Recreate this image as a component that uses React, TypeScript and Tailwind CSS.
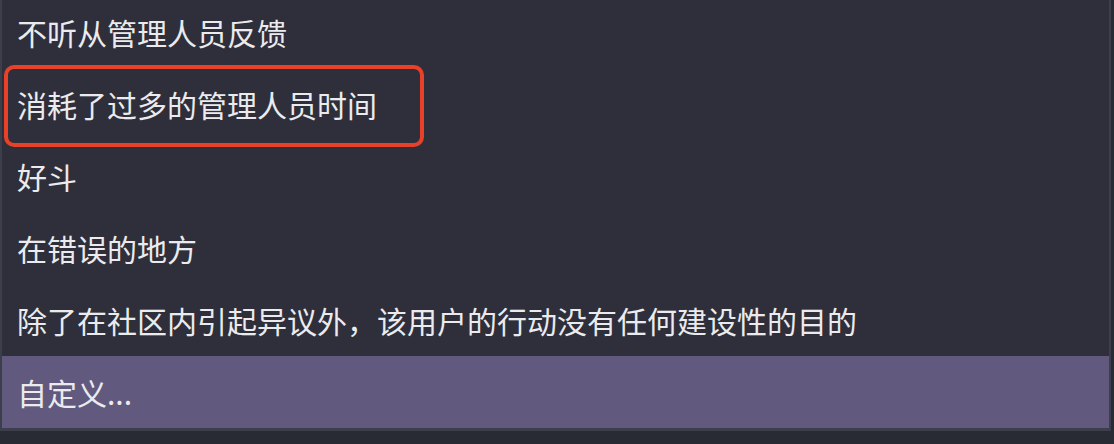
import React from 'react';

const reasons = [
  '不听从管理人员反馈',
  '消耗了过多的管理人员时间',
  '好斗',
  '在错误的地方',
  '除了在社区内引起异议外，该用户的行动没有任何建设性的目的',
  '自定义...',
];

export default function App() {
  return (
    <div
      className="h-[444px] w-[1114px] overflow-hidden bg-[#282a34]"
      style={{ fontFamily: '"Noto Sans CJK SC", "Noto Sans", sans-serif' }}
    >
      <div className="relative -mt-1 w-[1111px] border-x-[2px] border-b-[3px] border-[#3d3e4b] bg-[#2e2f3b]">
        {reasons.map((label, i) => (
          <div
            key={label}
            className={
              i === reasons.length - 1
                ? 'flex h-[72px] items-center bg-[#625a7e] pl-[15px] text-[30px] text-[#ebebee]'
                : 'flex h-[72px] items-center pl-[15px] text-[30px] text-[#ebebee]'
            }
          >
            {label}
          </div>
        ))}

        {/* annotation box */}
        <div className="pointer-events-none absolute left-[2px] top-[69px] h-[82px] w-[420px] rounded-[10px] border-[4px] border-[#e8412a]" />
      </div>
    </div>
  );
}
